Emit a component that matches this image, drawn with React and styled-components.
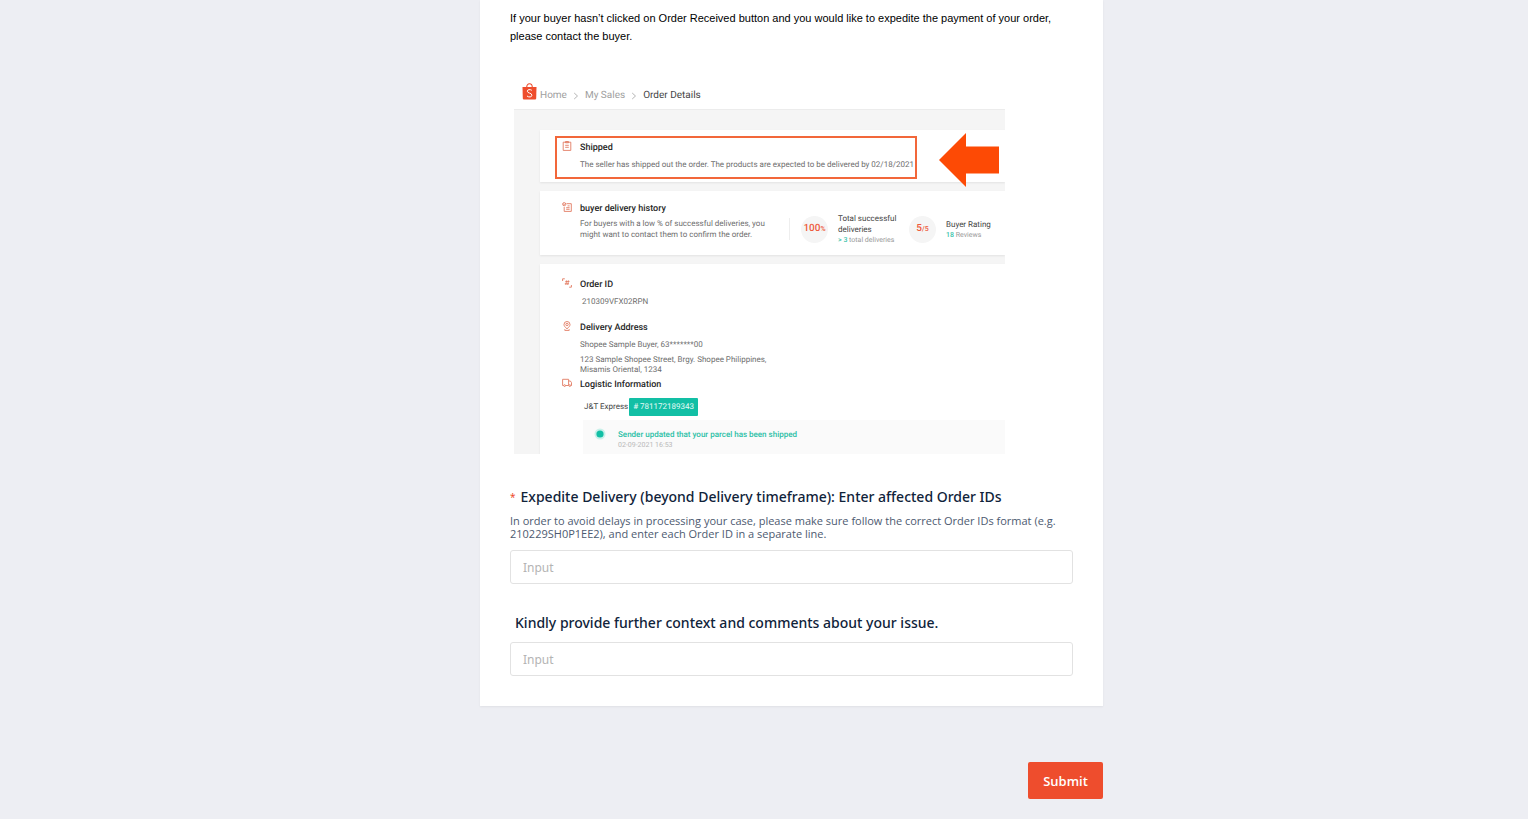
import React from 'react';
import styled, { createGlobalStyle } from 'styled-components';

const GlobalStyle = createGlobalStyle`
  *, *::before, *::after { box-sizing: border-box; }
  body {
    margin: 0;
    background: #edeef3;
    font-family: "Noto Sans", "Open Sans", sans-serif;
  }
  p, h2, h3, dl, dd { margin: 0; }
`;

const Page = styled.main`
  padding: 0 0 20px 55px;
`;

const Form = styled.form`
  width: 100%;
  max-width: 623px;
  margin: 0 auto;
`;

const Card = styled.section`
  padding: 9px 30px 30px;
  background: #fff;
  box-shadow: 0 1px 2px rgba(0, 0, 0, 0.06);
`;

const Note = styled.p`
  font: 11px/18px "Liberation Sans", Arial, sans-serif;
  color: #000;
`;

const Figure = styled.section`
  max-width: 491px;
  margin: 35px 0 0 4px;
  font-family: Roboto, sans-serif;
  font-size: 8px;
  line-height: 12px;
  color: #6e6e6e;
  text-rendering: geometricPrecision;
`;

const Crumbs = styled.nav`
  display: flex;
  align-items: center;
  height: 29px;
  padding: 2px 0 0 8px;
  gap: 6px;
  font-size: 10px;
  color: #a0a0a0;
`;

const HomeCrumb = styled.span`
  display: flex;
  align-items: center;
  gap: 3px;
  svg { margin-bottom: 8px; }
`;

const Current = styled.span`
  color: #444;
`;

const Board = styled.div`
  display: flex;
  flex-direction: column;
  gap: 9px;
  padding: 20px 0 0 26px;
  border-top: 1px solid #ececec;
  background: #f5f5f5;
  overflow: hidden;
`;

const Panel = styled.div`
  display: flex;
  align-items: flex-start;
  padding: ${(p) => p.$pad};
  background: #fff;
  box-shadow: 0 1px 2px rgba(0, 0, 0, 0.08);
`;

const Highlight = styled.div`
  flex: 0 0 362px;
  min-width: 0;
  padding: 3px 5px 6px;
  border: 2px solid #f2673a;
  white-space: nowrap;
`;

const ArrowSlot = styled.div`
  margin: -3px 0 -8px 22px;
  svg { display: block; }
`;

const Entry = styled.div`
  display: grid;
  grid-template-columns: 10px 1fr;
  column-gap: 8px;
  margin-top: ${(p) => p.$top || 0}px;
`;

const Title = styled.h3`
  font-size: 9px;
  line-height: 14px;
  font-weight: 500;
  color: #262626;
`;

const Detail = styled.p`
  margin-top: ${(p) => p.$top || 4}px;
  padding-left: ${(p) => p.$indent || 0}px;
  line-height: ${(p) => p.$line || 12}px;
`;

const History = styled.div`
  flex: 0 0 227px;
`;

const Stats = styled.div`
  display: flex;
  align-items: center;
  padding-top: 11px;
`;

const Stat = styled.div`
  display: flex;
  align-items: center;
  gap: 10px;
  flex: 0 0 ${(p) => p.$width}px;
`;

const Divider = styled.div`
  flex: 0 0 1px;
  height: 22px;
  margin-right: 11px;
  background: #eee;
`;

const Score = styled.div`
  display: flex;
  align-items: center;
  justify-content: center;
  flex: 0 0 27px;
  height: 27px;
  border-radius: 50%;
  background: #f5f5f5;
  color: #ee5b3c;
  font-size: 10px;
  font-weight: 500;
  small { font-size: 7px; }
`;

const StatText = styled.div`
  color: #444;
  line-height: 11px;
  white-space: nowrap;
`;

const StatNote = styled.p`
  font-size: 7px;
  line-height: 10px;
  color: #999;
  b { color: #3cc4ac; font-weight: 500; }
`;

const Details = styled.div`
  flex: 1;
  min-width: 0;
`;

const Courier = styled.div`
  display: flex;
  align-items: center;
  gap: 1px;
  margin: 6px 0 4px 22px;
  color: #444;
`;

const Tracking = styled.span`
  padding: 0 4px;
  border-radius: 1px;
  background: #12bfa5;
  color: #e4fbf6;
  line-height: 18px;
`;

const Status = styled.div`
  display: flex;
  align-items: flex-start;
  gap: 12px;
  height: 34px;
  margin-left: 21px;
  padding: 8px 0 0 11px;
  background: #fafafa;
`;

const StatusText = styled.div`
  padding-top: 1px;
  color: #2cc0a6;
  font-weight: 500;
`;

const StatusTime = styled.p`
  font-size: 7px;
  line-height: 8px;
  font-weight: 400;
  color: #b8b8b8;
`;

const Field = styled.div`
  margin-top: ${(p) => p.$top}px;
`;

const Label = styled.label`
  display: flex;
  gap: 5px;
  padding-left: ${(p) => (p.$required ? 0 : 5)}px;
  font-size: 14px;
  line-height: 20px;
  font-weight: 500;
  color: #10233a;
`;

const Star = styled.span`
  font-size: 10px;
  font-weight: 400;
  color: #ee4d2d;
`;

const Hint = styled.p`
  margin-top: 7px;
  font: 11px/13px "Open Sans", "Noto Sans", sans-serif;
  color: #4d5a70;
`;

const Input = styled.input`
  display: block;
  width: 100%;
  height: 34px;
  margin-top: ${(p) => p.$top}px;
  padding: 0 12px;
  border: 1px solid #e2e2e2;
  border-radius: 3px;
  background: #fff;
  font: 12px/18px "Noto Sans", "Open Sans", sans-serif;
  color: #10233a;
  &::placeholder { color: #b4b4b4; opacity: 1; }
`;

const Actions = styled.div`
  display: flex;
  justify-content: flex-end;
  margin-top: 56px;
`;

const Submit = styled.button`
  width: 75px;
  height: 37px;
  padding: 0;
  border: 0;
  border-radius: 2px;
  background: #ee4d2d;
  color: #fff;
  font: 600 13px/18px "Open Sans", "Noto Sans", sans-serif;
`;

const Icon = ({ children }) => (
  <svg width="10" height="10" viewBox="0 0 10 10" fill="none" stroke="#e27a62" strokeWidth="0.9" aria-hidden="true">
    {children}
  </svg>
);

const BagLogo = () => (
  <svg width="15" height="17" viewBox="0 0 15 17" fill="none" aria-hidden="true">
    <path d="M4.7 4.5C4.7 2.2 5.8 .8 7.5 .8s2.8 1.4 2.8 3.7" stroke="#ee4d2d" strokeWidth="1.1" />
    <path d="M.5 4h14l-.3 11.6q-.1 1-1.1 1H1.9q-1 0-1.1-1z" fill="#ee4d2d" />
    <path d="M9.8 7.3C8.300 6.200 5.300 6.300 5.300 8.200c0 2.200 4.600 1.600 4.600 4 0 2.100-3.100 2.300-4.900.8" stroke="#fff" strokeWidth="1" />
  </svg>
);

const Chevron = () => (
  <svg width="6" height="8" viewBox="0 0 6 8" fill="none" stroke="#b5b5b5" aria-hidden="true">
    <path d="M1.200 1 4.500 4 1.200 7" />
  </svg>
);

const Arrow = () => (
  <svg width="60" height="54" viewBox="0 0 60 54" aria-hidden="true">
    <path d="M0 27 27 0v13.500h33v27H27V54z" fill="#fd4a05" />
  </svg>
);

const ClipboardIcon = () => (
  <Icon>
    <path d="M1.200 1.200h7.600v8.200H1.200zM3.500.5h3v1.300h-3zM3.200 4.300h3.600M3.200 6.300h3.600" />
  </Icon>
);

const HistoryIcon = () => (
  <Icon>
    <path d="M4.500 1.700h4.800v7.700H2.200V5M5.600 3.900h2M4.200 5.700h3.400M4.200 7.300h3.400" />
    <circle cx="2.200" cy="2.200" r="1.600" />
    <path d="m1.400 2.200.7.600 1-1.200" />
  </Icon>
);

const ScanIcon = () => (
  <Icon>
    <path d="M.6 3V.8h2.200M9.400 7v2.200H7.200M3.300 3.400h4.200M2.800 5.800H7M4.600 2.500l-.8 4.300M6.500 2.500l-.8 4.300" />
  </Icon>
);

const PinIcon = () => (
  <Icon>
    <path d="M5 7.800C3.200 6.300 2 5 2 3.500a3 3 0 0 1 6 0C8 5 6.800 6.300 5 7.800zM2.800 8.200v1.200h4.400V8.200" />
    <circle cx="5" cy="3.500" r="1.200" />
  </Icon>
);

const TruckIcon = () => (
  <Icon>
    <path d="M1.700 7.500H.6V1.300h6v6.200H3.500M6.600 3h1.800l1.100 1.700v2.800h-.8" />
    <circle cx="2.600" cy="7.600" r=".9" />
    <circle cx="7.800" cy="7.600" r=".9" />
  </Icon>
);

const StatusDot = () => (
  <svg width="12" height="12" viewBox="0 0 12 12" aria-hidden="true">
    <circle cx="6" cy="6" r="5.500" fill="#c9f1ea" />
    <circle cx="6" cy="6" r="3.600" fill="#12bfa5" />
  </svg>
);

const OrderExample = () => (
  <Figure aria-label="Order details example">
    <Crumbs aria-label="Breadcrumb">
      <HomeCrumb><BagLogo />Home</HomeCrumb>
      <Chevron />
      <span>My Sales</span>
      <Chevron />
      <Current>Order Details</Current>
    </Crumbs>
    <Board>
      <Panel $pad="6px 0 3px 15px">
        <Highlight>
          <Entry>
            <ClipboardIcon />
            <div>
              <Title>Shipped</Title>
              <Detail>The seller has shipped out the order. The products are expected to be delivered by 02/18/2021</Detail>
            </div>
          </Entry>
        </Highlight>
        <ArrowSlot><Arrow /></ArrowSlot>
      </Panel>
      <Panel $pad="11px 0 10px 22px">
        <History>
          <Entry>
            <HistoryIcon />
            <div>
              <Title>buyer delivery history</Title>
              <Detail $top={2} $line={11}>
                For buyers with a low % of successful deliveries, you<br />
                might want to contact them to confirm the order.
              </Detail>
            </div>
          </Entry>
        </History>
        <Stats>
          <Divider />
          <Stat $width={108}>
            <Score>100<small>%</small></Score>
            <StatText>
              <p>Total successful<br />deliveries</p>
              <StatNote><b>&gt; 3</b> total deliveries</StatNote>
            </StatText>
          </Stat>
          <Stat $width={90}>
            <Score>5<small>/5</small></Score>
            <StatText>
              <p>Buyer Rating</p>
              <StatNote><b>18</b> Reviews</StatNote>
            </StatText>
          </Stat>
        </Stats>
      </Panel>
      <Panel $pad="14px 0 0 22px">
        <Details>
          <Entry>
            <ScanIcon />
            <div>
              <Title>Order ID</Title>
              <Detail $indent={2}>210309VFX02RPN</Detail>
            </div>
          </Entry>
          <Entry $top={13}>
            <PinIcon />
            <div>
              <Title>Delivery Address</Title>
              <Detail>Shopee Sample Buyer, 63*******00</Detail>
              <Detail $line={10}>
                123 Sample Shopee Street, Brgy. Shopee Philippines,<br />
                Misamis Oriental, 1234
              </Detail>
            </div>
          </Entry>
          <Entry $top={3}>
            <TruckIcon />
            <Title>Logistic Information</Title>
          </Entry>
          <Courier>J&amp;T Express<Tracking># 781172189343</Tracking></Courier>
          <Status>
            <StatusDot />
            <StatusText>
              <p>Sender updated that your parcel has been shipped</p>
              <StatusTime>02-09-2021 16:53</StatusTime>
            </StatusText>
          </Status>
        </Details>
      </Panel>
    </Board>
  </Figure>
);

export default function App() {
  return (
    <Page>
      <GlobalStyle />
      <Form onSubmit={(e) => e.preventDefault()}>
        <Card>
          <Note>
            If your buyer hasn’t clicked on Order Received button and you would like to expedite the payment of your order, please contact the buyer.
          </Note>
          <OrderExample />
          <Field $top={33}>
            <Label htmlFor="order-ids" $required>
              <Star>*</Star>
              Expedite Delivery (beyond Delivery timeframe): Enter affected Order IDs
            </Label>
            <Hint id="order-ids-hint">
              In order to avoid delays in processing your case, please make sure follow the correct Order IDs format (e.g. 210229SH0P1EE2), and enter each Order ID in a separate line.
            </Hint>
            <Input id="order-ids" aria-describedby="order-ids-hint" placeholder="Input" $top={10} />
          </Field>
          <Field $top={29}>
            <Label htmlFor="comments">Kindly provide further context and comments about your issue.</Label>
            <Input id="comments" placeholder="Input" $top={9} />
          </Field>
        </Card>
        <Actions>
          <Submit type="submit">Submit</Submit>
        </Actions>
      </Form>
    </Page>
  );
}
